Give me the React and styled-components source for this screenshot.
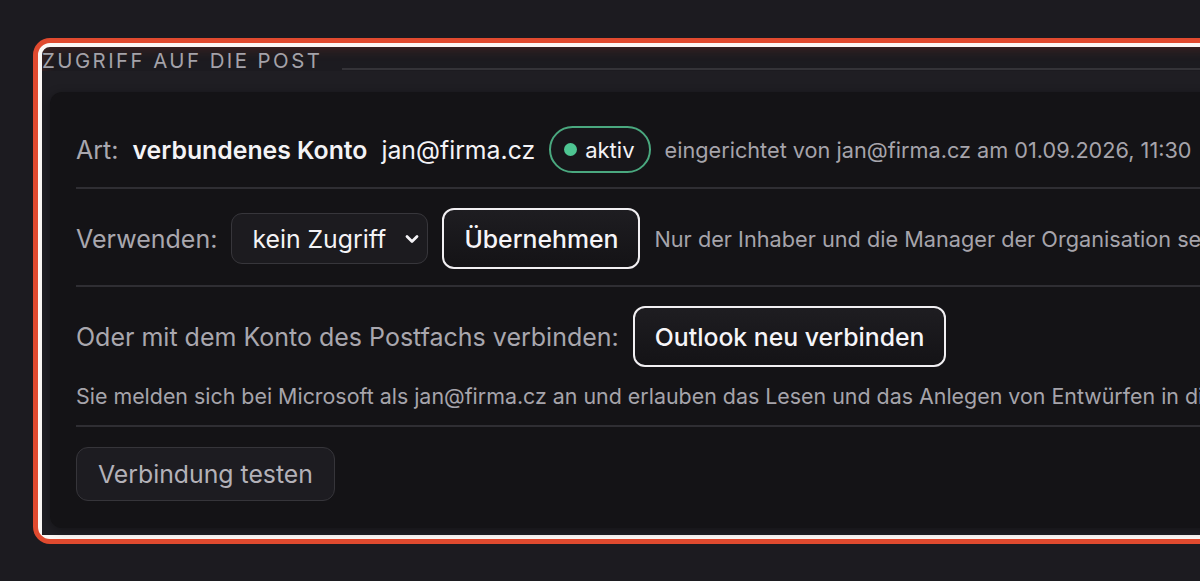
import React from "react";
import styled, { createGlobalStyle } from "styled-components";

const GlobalStyle = createGlobalStyle`
  html, body {
    margin: 0;
    padding: 0;
    background: #1c1b20;
    overflow: hidden;
  }
  body {
    font-family: Inter, "Noto Sans", "Liberation Sans", sans-serif;
    -webkit-font-smoothing: antialiased;
  }
`;

const Page = styled.div`
  width: 1200px;
  height: 581px;
  padding: 43px 0 0 38px;
  box-sizing: border-box;
  overflow: hidden;
`;

const Highlight = styled.div`
  width: 1400px;
  border: 4px solid #fbf7f5;
  border-radius: 12px;
  box-shadow: 0 0 0 5px #e04a2f, inset 0 0 14px rgba(210, 70, 40, 0.28);
  background: #1c1b20;
`;

const LegendRow = styled.div`
  display: flex;
  align-items: flex-end;
  height: 24px;
`;

const Legend = styled.div`
  font-size: 20.4px;
  letter-spacing: 2.45px;
  color: #a4a2a9;
  line-height: 21px;
  padding-right: 20px;
  white-space: nowrap;
`;

const LegendLine = styled.div`
  flex: 1;
  height: 2px;
  margin-bottom: 1px;
  background: #343338;
`;

const Section = styled.div`
  background: #1f1e23;
  padding: 21px 0 7px 8px;
`;

const Card = styled.div`
  background: #141316;
  border-radius: 12px;
  padding: 14px 26px 27px;
  box-shadow: 0 2px 10px rgba(0, 0, 0, 0.35);
`;

const Row = styled.div`
  display: flex;
  flex-wrap: ${({ $wrap }) => ($wrap ? "wrap" : "nowrap")};
  align-items: center;
  column-gap: 14px;
  row-gap: 14px;
  padding: ${({ $first, $last }) =>
    $first ? "20px 0 14px" : $last ? "20px 0 0" : "19px 0 16px"};
  border-bottom: ${({ $last }) => ($last ? "none" : "2px solid #2f2e33")};
  white-space: nowrap;

  & > * {
    flex-shrink: 0;
  }
`;

const Label = styled.span`
  font-size: 25px;
  color: #a9a7ae;
`;

const Strong = styled.span`
  font-size: 24.8px;
  font-weight: ${({ $bold }) => ($bold ? 600 : 400)};
  color: #f4f3f6;
`;

const Note = styled.span`
  font-size: 21.7px;
  color: #a6a4ab;
`;

const Badge = styled.span`
  display: inline-flex;
  align-items: center;
  gap: 8px;
  height: 47px;
  box-sizing: border-box;
  padding: 0 14px 0 13px;
  border: 2px solid #4aa87f;
  border-radius: 24px;
  font-size: 22px;
  color: #f4f3f6;
  background: #17161a;
`;

const Dot = styled.span`
  width: 13px;
  height: 13px;
  border-radius: 50%;
  background: #4ec592;
`;

const SelectBox = styled.div`
  display: inline-flex;
  align-items: center;
  justify-content: space-between;
  width: 197px;
  height: 51px;
  box-sizing: border-box;
  padding: 0 8px 0 20px;
  border: 1px solid #37363b;
  border-radius: 11px;
  background: #1c1b1f;
  font-size: 24.8px;
  color: #f4f3f6;
`;

const Button = styled.button`
  font-family: inherit;
  display: inline-flex;
  align-items: center;
  justify-content: center;
  height: ${({ $primary }) => ($primary ? 61 : 54)}px;
  padding: 0 ${({ $primary }) => ($primary ? 20 : 21)}px;
  box-sizing: border-box;
  border-radius: 12px;
  border: ${({ $primary }) => ($primary ? "2px solid #f1eff2" : "1px solid #36353a")};
  background: ${({ $primary }) =>
    $primary ? "linear-gradient(#1e1d21, #141316)" : "#1d1c21"};
  color: ${({ $primary }) => ($primary ? "#f6f5f8" : "#b3b1b8")};
  font-size: 24.8px;
  font-weight: ${({ $primary }) => ($primary ? 500 : 400)};
  white-space: nowrap;
  cursor: pointer;
`;

const Desc = styled.div`
  flex-basis: 100%;
  margin-top: 2px;
  font-size: 21.4px;
  color: #a6a4ab;
`;

const Chevron = () => (
  <svg width="14" height="10" viewBox="0 0 14 10" fill="none">
    <path d="M2 2.5l5 5 5-5" stroke="#f4f3f6" strokeWidth="2.8" strokeLinecap="round" strokeLinejoin="round" />
  </svg>
);

export default function App() {
  return (
    <Page>
      <GlobalStyle />
      <Highlight>
        <LegendRow>
          <Legend>ZUGRIFF AUF DIE POST</Legend>
          <LegendLine />
        </LegendRow>
        <Section>
          <Card>
            <Row $first>
              <Label>Art:</Label>
              <Strong $bold>verbundenes Konto</Strong>
              <Strong>jan@firma.cz</Strong>
              <Badge>
                <Dot />
                aktiv
              </Badge>
              <Note>eingerichtet von jan@firma.cz am 01.09.2026, 11:30</Note>
            </Row>
            <Row>
              <Label>Verwenden:</Label>
              <SelectBox>
                kein Zugriff
                <Chevron />
              </SelectBox>
              <Button $primary>Übernehmen</Button>
              <Note>Nur der Inhaber und die Manager der Organisation sehen und ändern diese Einstellung.</Note>
            </Row>
            <Row $wrap>
              <Label>Oder mit dem Konto des Postfachs verbinden:</Label>
              <Button $primary>Outlook neu verbinden</Button>
              <Desc>
                Sie melden sich bei Microsoft als jan@firma.cz an und erlauben das Lesen und das Anlegen von Entwürfen in diesem Postfach.
              </Desc>
            </Row>
            <Row $last>
              <Button>Verbindung testen</Button>
            </Row>
          </Card>
        </Section>
      </Highlight>
    </Page>
  );
}
